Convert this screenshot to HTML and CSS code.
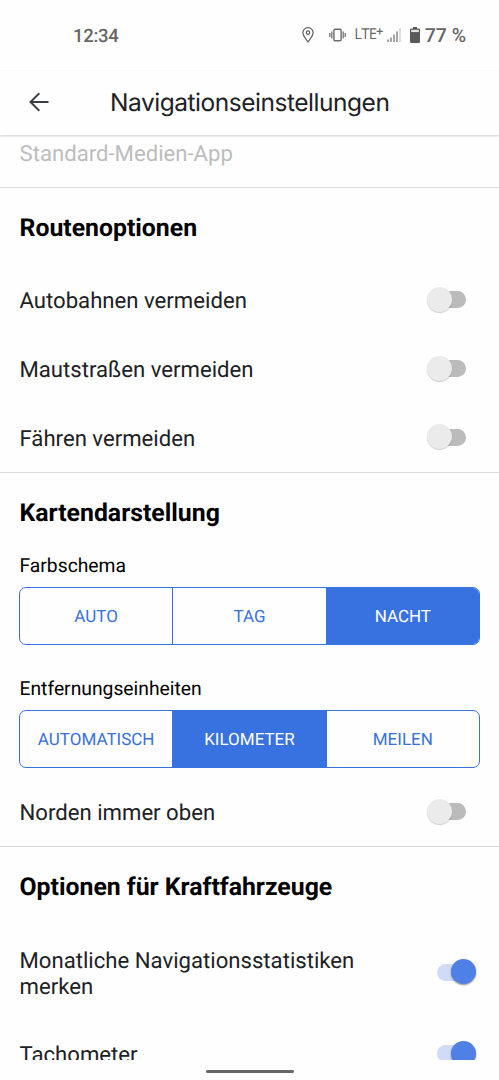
FILE: index.html
```html
<!DOCTYPE html>
<html lang="de">
<head>
    <meta charset="UTF-8">
    <meta name="viewport" content="width=device-width, initial-scale=1.0">
    <title>Navigationseinstellungen</title>
    <link rel="stylesheet" href="styles.css">
</head>
<body>
    <div class="status-bar">
        <span class="time">12:34</span>
        <div class="status-icons">
            <svg class="pin" width="12" height="16" viewBox="0 0 12 16" fill="none" stroke="#5f5f5f" stroke-width="1.2">
                <path d="M6 15C3.6 11.8.9 8.8.9 5.8a5.1 5.1 0 0 1 10.2 0C11.1 8.8 8.4 11.8 6 15z"/>
                <circle cx="6" cy="5.6" r="1.7"/>
            </svg>
            <svg class="vibrate" width="17" height="14" viewBox="0 0 17 14" fill="none" stroke="#6a6a6a" stroke-width="1.2">
                <rect x="4.9" y="1.2" width="7.2" height="11.6" rx="1.2" stroke-width="1.4"/>
                <path d="M2.8 3.5v7M.8 5v4M14.2 3.5v7M16.2 5v4"/>
            </svg>
            <span class="lte">LTE<span class="plus">+</span></span>
            <svg class="signal" width="14" height="14" viewBox="0 0 14 14" stroke="#6a6a6a" stroke-width="1.2">
                <path d="M1 14v-2.5M4 14V9.5M7 14V6.5M10 14V3.5"/>
                <path d="M13 14V0" stroke="#c8c8c8"/>
            </svg>
            <svg class="battery" width="10" height="16" viewBox="0 0 10 16" fill="#5a5a5a">
                <path d="M3 0h4v1.5h1.8q1.2 0 1.2 1.2v12.1q0 1.2-1.2 1.2H1.2Q0 16 0 14.8V2.7q0-1.2 1.2-1.2H3z"/>
                <path d="M1.2 2.8h7.6v2.3H1.2z" fill="#e4e4e4"/>
            </svg>
            <span class="percent">77 %</span>
        </div>
    </div>
    <div class="header">
        <svg class="back" width="20" height="20" viewBox="0 0 20 20" fill="none" stroke="#3c4043" stroke-width="2">
            <path d="M19.5 10H1.8M10.3 1.2L1.5 10l8.8 8.8"/>
        </svg>
        <h1>Navigationseinstellungen</h1>
    </div>
    <div class="content">
        <div class="section media">Standard-Medien-App</div>
        <div class="section">
            <h2>Routenoptionen</h2>
            <div class="row">
                <span>Autobahnen vermeiden</span>
                <div class="switch"></div>
            </div>
            <div class="row">
                <span>Mautstraßen vermeiden</span>
                <div class="switch"></div>
            </div>
            <div class="row">
                <span>Fähren vermeiden</span>
                <div class="switch"></div>
            </div>
        </div>
        <div class="section">
            <h2>Kartendarstellung</h2>
            <div class="label">Farbschema</div>
            <div class="segments">
                <div class="segment">AUTO</div>
                <div class="segment">TAG</div>
                <div class="segment selected">NACHT</div>
            </div>
            <div class="label">Entfernungseinheiten</div>
            <div class="segments last">
                <div class="segment">AUTOMATISCH</div>
                <div class="segment selected">KILOMETER</div>
                <div class="segment">MEILEN</div>
            </div>
            <div class="row">
                <span>Norden immer oben</span>
                <div class="switch"></div>
            </div>
        </div>
        <div class="section">
            <h2>Optionen für Kraftfahrzeuge</h2>
            <div class="row tall">
                <span>Monatliche Navigationsstatistiken merken</span>
                <div class="switch on"></div>
            </div>
            <div class="row">
                <span>Tachometer</span>
                <div class="switch on"></div>
            </div>
        </div>
    </div>
    <div class="nav-bar">
        <div class="handle"></div>
    </div>
</body>
</html>
```
FILE: styles.css
```css
*{
    box-sizing: border-box;
}
body{
    margin: 0;
    height: 1080px;
    display: flex;
    flex-direction: column;
    overflow: hidden;
    background-color: #fefefe;
    color: #202124;
    font-family: Roboto, sans-serif;
    text-rendering: geometricPrecision;
}
.status-bar{
    display: flex;
    justify-content: space-between;
    align-items: center;
    flex: none;
    height: 71px;
    padding: 0 33px 0 73px;
    color: #666;
    font-size: 18.5px;
    font-weight: 500;
}
.time{
    letter-spacing: -0.3px;
}
.status-icons{
    display: flex;
    align-items: center;
    padding-bottom: 1px;
}
.vibrate{
    margin-left: 15px;
}
.lte{
    margin: -2px 0 0 8px;
    font-family: "Open Sans", sans-serif;
    font-size: 15px;
    font-weight: 400;
    letter-spacing: -0.9px;
}
.plus{
    position: relative;
    top: -3px;
    font-size: 13px;
    font-weight: 600;
}
.signal{
    margin: 0 0 0 4px;
}
.battery{
    margin-left: 9px;
}
.percent{
    margin-left: 5px;
    font-size: 19.5px;
}
.header{
    display: flex;
    align-items: center;
    flex: none;
    height: 64px;
    padding: 0 0 3px 29px;
    box-shadow: 0 1px 2px rgba(0,0,0,0.18);
}
.header h1{
    margin: 0 0 0 61px;
    font-family: Inter, sans-serif;
    font-size: 24.5px;
    font-weight: 400;
    letter-spacing: -0.47px;
    white-space: nowrap;
}
.content{
    flex: none;
    height: 925px;
    overflow: hidden;
}
.section{
    border-bottom: 1px solid #dcdcdc;
}
.media{
    height: 52.5px;
    padding: 6px 19.5px 0;
    color: #bdbdbd;
    font-size: 22.15px;
    line-height: 27px;
}
.section h2{
    height: 78px;
    margin: 0;
    padding: 0 19.5px;
    color: #000;
    font-size: 24.8px;
    font-weight: 700;
    line-height: 81px;
}
.row{
    display: flex;
    justify-content: space-between;
    align-items: center;
    height: 68.7px;
    padding: 0 33px 0 19.5px;
    font-size: 22.15px;
    line-height: 26px;
}
.row span{
    padding-top: 3px;
}
.row.tall{
    height: 94px;
    padding-right: 23px;
}
.row.tall span{
    width: 350px;
}
.tall + .row{
    padding-right: 23px;
}
.label{
    height: 36px;
    padding-left: 19.5px;
    color: #000;
    font-size: 19.3px;
    line-height: 29px;
}
.segments{
    display: flex;
    height: 58px;
    margin: 0 19px 29.5px;
    overflow: hidden;
    border: 1.5px solid #3871e0;
    border-radius: 7px;
}
.segments.last{
    margin-bottom: 9.5px;
}
.segment{
    flex: 1;
    display: flex;
    justify-content: center;
    align-items: center;
    padding-top: 2px;
    color: #3871e0;
    font-size: 17px;
}
.segment + .segment{
    border-left: 1.5px solid #3871e0;
}
.segment.selected{
    background-color: #3871e0;
    color: white;
}
.switch{
    display: flex;
    align-items: center;
    position: relative;
    width: 39px;
    height: 26px;
}
.switch::before{
    content: "";
    width: 33px;
    height: 17px;
    margin-left: 6px;
    border-radius: 9px;
    background-color: #bbb;
}
.switch::after{
    content: "";
    position: absolute;
    left: 0;
    top: 0;
    width: 25px;
    height: 25px;
    border-radius: 50%;
    background-color: #ebebeb;
    box-shadow: 0 1px 1px rgba(0,0,0,0.2);
}
.switch.on::before{
    margin-left: 0;
    background-color: #cfdcf8;
}
.switch.on::after{
    left: 14px;
    background-color: #4f80e6;
    box-shadow: 0 1px 2px rgba(0,0,0,0.45);
}
.nav-bar{
    display: flex;
    justify-content: center;
    align-items: center;
    height: 21px;
    padding-top: 2px;
}
.handle{
    width: 88px;
    height: 3px;
    border-radius: 2px;
    background-color: #666;
}
```
